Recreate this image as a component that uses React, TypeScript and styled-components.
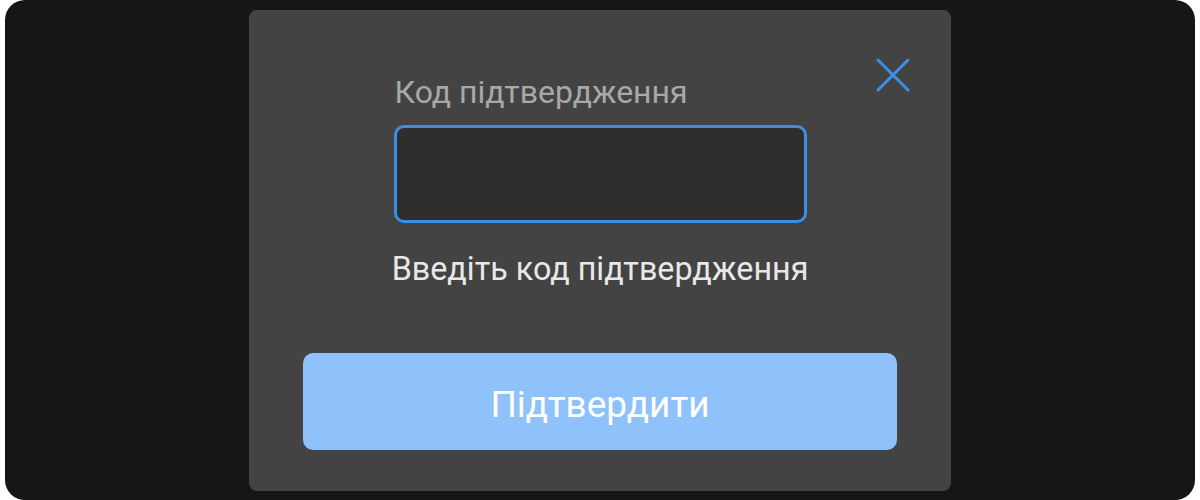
import React, { FC, useState } from "react";
import styled, { createGlobalStyle } from "styled-components";

const GlobalStyle = createGlobalStyle`
  body {
    margin: 0;
    background: #ffffff;
    font-family: Roboto, "Liberation Sans", sans-serif;
  }
`;

interface CodeDialogProps {
  onClose?: () => void;
  onSubmit?: (code: string) => void;
}

const CodeDialog: FC<CodeDialogProps> = ({ onClose, onSubmit }) => {
  const [code, setCode] = useState("");

  return (
    <Modal>
      <CloseButton aria-label="Закрити" onClick={onClose}>
        <svg width="34" height="34" viewBox="0 0 34 34" fill="none">
          <path
            d="M2 2L32 32M32 2L2 32"
            stroke="#3d8fe9"
            strokeWidth="3"
            strokeLinecap="round"
          />
        </svg>
      </CloseButton>
      <Field>
        <Label htmlFor="code">Код підтвердження</Label>
        <CodeInput
          id="code"
          value={code}
          onChange={(e) => setCode(e.target.value)}
        />
      </Field>
      <Hint>Введіть код підтвердження</Hint>
      <SubmitButton onClick={() => onSubmit?.(code)}>Підтвердити</SubmitButton>
    </Modal>
  );
};

const App: FC = () => (
  <>
    <GlobalStyle />
    <Backdrop>
      <CodeDialog />
    </Backdrop>
  </>
);

export default App;

const Backdrop = styled.div`
  margin: 0 5px;
  height: 500px;
  border-radius: 20px;
  background: #161616;
  display: flex;
  justify-content: center;
  align-items: flex-start;
  padding-top: 10px;
  box-sizing: border-box;
`;

const Modal = styled.div`
  position: relative;
  width: 702px;
  height: 481px;
  border-radius: 8px;
  background: #434343;
  display: flex;
  flex-direction: column;
  align-items: center;
  padding-top: 63px;
  box-sizing: border-box;
`;

const CloseButton = styled.button`
  position: absolute;
  top: 48px;
  right: 41px;
  padding: 0;
  border: none;
  background: none;
  cursor: pointer;
  line-height: 0;
`;

const Field = styled.div`
  width: 413px;
  display: flex;
  flex-direction: column;
  gap: 14px;
`;

const Label = styled.label`
  padding-left: 1px;
  font-size: 32px;
  line-height: 38px;
  color: #a8a8a8;
`;

const CodeInput = styled.input`
  box-sizing: border-box;
  height: 98px;
  border: 3px solid #3b8ee8;
  border-radius: 10px;
  background: #2e2e2e;
  color: #ffffff;
  font: inherit;
  font-size: 32px;
  padding: 0 16px;
  outline: none;
`;

const Hint = styled.p`
  margin: 27px 0 0;
  font-size: 32.3px;
  line-height: 38px;
  color: #e8e8e8;
`;

const SubmitButton = styled.button`
  margin-top: 65px;
  width: 594px;
  height: 97px;
  padding: 5px 0 0;
  border: none;
  border-radius: 10px;
  background: #8fc1fb;
  color: #ffffff;
  font-family: inherit;
  font-size: 37px;
  cursor: pointer;
`;
